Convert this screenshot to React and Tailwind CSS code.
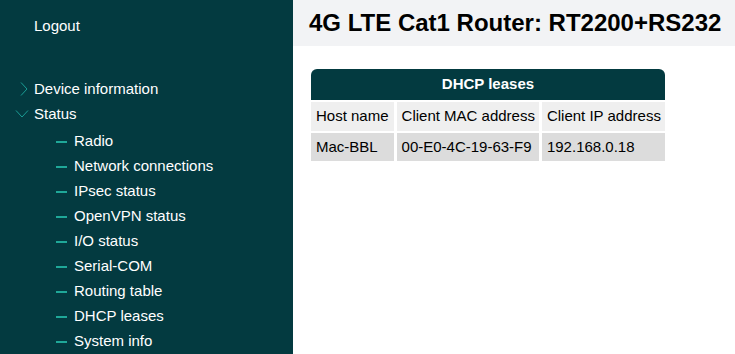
import React from "react";

const statusItems = [
  "Radio",
  "Network connections",
  "IPsec status",
  "OpenVPN status",
  "I/O status",
  "Serial-COM",
  "Routing table",
  "DHCP leases",
  "System info",
];

const leases = [{ host: "Mac-BBL", mac: "00-E0-4C-19-63-F9", ip: "192.168.0.18" }];

function ChevronRight() {
  return (
    <svg width="10" height="16" viewBox="0 0 10 16" fill="none" className="absolute left-[-15px] top-[1px]">
      <path d="M2 1.5 L8 8 L2 14.5" stroke="#1a9d95" strokeWidth="1" />
    </svg>
  );
}

function ChevronDown() {
  return (
    <svg width="14" height="10" viewBox="0 0 14 10" fill="none" className="absolute left-[-19px] top-[4px]">
      <path d="M1 1.5 L7 8 L13 1.5" stroke="#1a9d95" strokeWidth="1" />
    </svg>
  );
}

export default function App() {
  return (
    <div
      className="flex min-h-[354px] w-[735px] text-[15px] bg-white"
      style={{ fontFamily: '"Liberation Sans", Arial, sans-serif' }}
    >
      <aside className="w-[293px] shrink-0 bg-[#033a40] text-white">
        <div className="pl-[34px] pt-[17px] h-[80px] leading-[18px]">Logout</div>
        <ul className="pl-[34px]">
          <li className="relative h-[25px] leading-[18px]">
            <ChevronRight />
            Device information
          </li>
          <li className="relative h-[25px] leading-[18px]">
            <ChevronDown />
            Status
            <ul className="mt-[9px]">
              {statusItems.map((item) => (
                <li key={item} className="relative h-[25px] leading-[18px] pl-[40px]">
                  <span className="absolute left-[22px] top-[9px] h-[2px] w-[11px] bg-[#1fa899]" />
                  {item}
                </li>
              ))}
            </ul>
          </li>
        </ul>
      </aside>

      <main className="flex-1">
        <div className="h-[46px] bg-[#f2f3f5] pl-[16px] pt-[9px]">
          <h1 className="text-[24px] font-bold leading-[28px] text-black">
            4G LTE Cat1 Router: RT2200+RS232
          </h1>
        </div>
        <table className="ml-[15px] mt-[21px] border-separate border-spacing-x-[3px] border-spacing-y-[2px] text-black">
          <thead>
            <tr>
              <th
                colSpan={3}
                className="h-[31px] rounded-t-[6px] bg-[#033a40] font-bold text-white"
              >
                DHCP leases
              </th>
            </tr>
          </thead>
          <tbody>
            <tr className="bg-[#efefef]">
              <td className="h-[29px] pl-[5px] pr-[5px]">Host name</td>
              <td className="pl-[5px] pr-[4px]">Client MAC address</td>
              <td className="pl-[5px] pr-[4px]">Client IP address</td>
            </tr>
            {leases.map((l) => (
              <tr key={l.mac} className="bg-[#dcdcdc]">
                <td className="h-[28px] pl-[5px] pr-[5px]">{l.host}</td>
                <td className="pl-[5px] pr-[4px]">{l.mac}</td>
                <td className="pl-[5px] pr-[4px]">{l.ip}</td>
              </tr>
            ))}
          </tbody>
        </table>
      </main>
    </div>
  );
}
